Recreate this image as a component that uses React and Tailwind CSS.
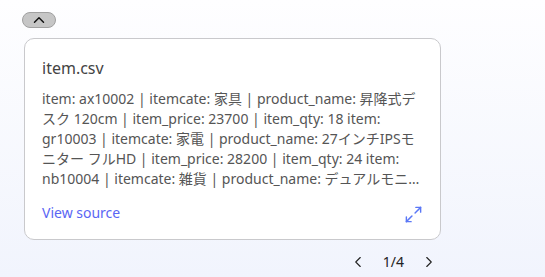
import React from "react";
import { ChevronUp, ChevronLeft, ChevronRight, Maximize2 } from "lucide-react";

export default function App() {
  const font = { fontFamily: '"Noto Sans", "Noto Sans CJK JP", sans-serif' };
  return (
    <div
      className="w-[545px] h-[277px] bg-gradient-to-b from-[#fefeff] to-[#f1f4fd] overflow-hidden flex flex-col pt-[12px]"
      style={font}
    >
      <button className="ml-[22px] w-[34px] h-[16px] rounded-full bg-[#c6c6c6] border border-[#a0a0a0] flex items-center justify-center">
        <ChevronUp size={18} strokeWidth={2} className="text-[#111]" />
      </button>
      <div className="ml-[24px] mt-[10px] w-[417px] h-[202px] bg-white border border-[#c9c9cc] rounded-[10px] px-[17px] pt-[17px] pb-[15px] flex flex-col">
        <div className="text-[16px] leading-[24px] text-[#444]">item.csv</div>
        <p className="mt-[9px] text-[14px] leading-[20px] text-[#555] line-clamp-5">
          item: ax10002 | itemcate: 家具 | product_name: 昇降式デスク 120cm | item_price: 23700 | item_qty: 18 item: gr10003 | itemcate: 家電 | product_name: 27インチIPSモニター フルHD | item_price: 28200 | item_qty: 24 item: nb10004 | itemcate: 雑貨 | product_name: デュアルモニターアーム | item_price: 9800 | item_qty: 40
        </p>
        <div className="mt-auto flex items-center justify-between">
          <span className="text-[14px] leading-[20px] text-[#5a66f4]">View source</span>
          <Maximize2 size={19} strokeWidth={1.8} className="text-[#5b78f6] mt-[4px]" />
        </div>
      </div>
      <div className="w-[441px] mt-[8px] flex items-center justify-end gap-[13px] h-[28px]">
        <ChevronLeft size={18} strokeWidth={1.5} className="text-[#222] mx-[3px]" />
        <span className="text-[14px] text-[#222] leading-[20px]">1/4</span>
        <ChevronRight size={18} strokeWidth={1.5} className="text-[#222] mx-[3px]" />
      </div>
    </div>
  );
}
